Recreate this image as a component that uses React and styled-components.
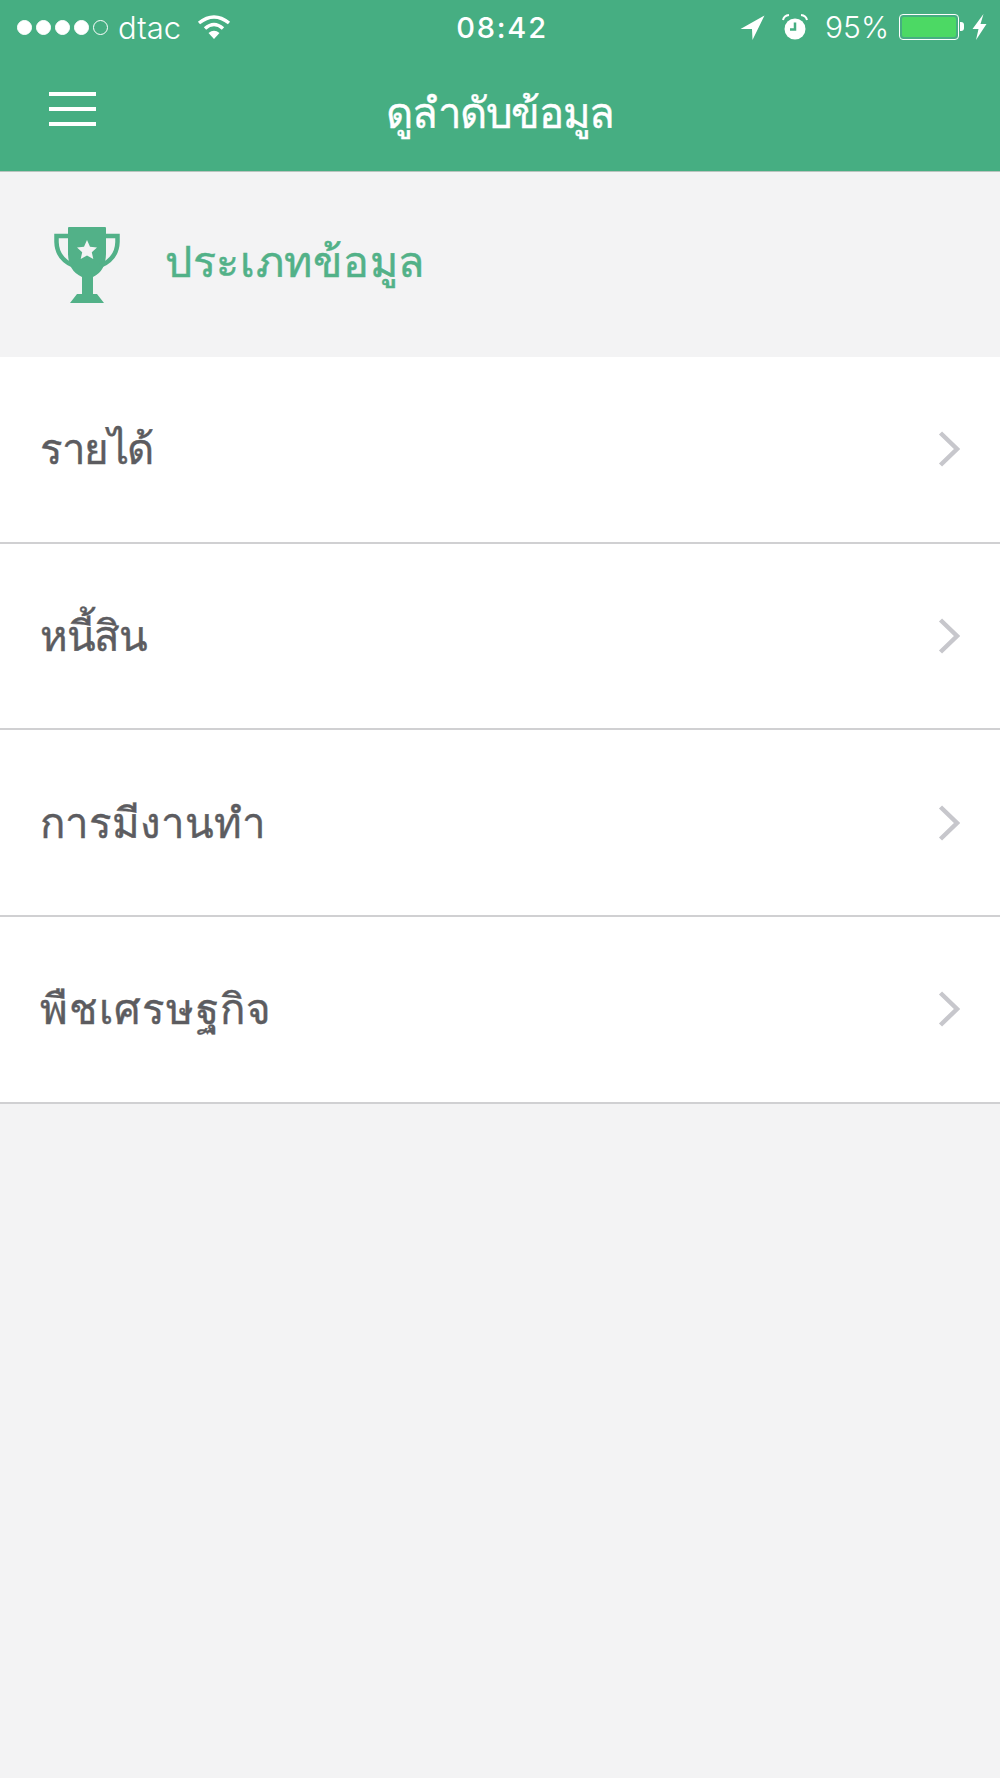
import styled, { createGlobalStyle } from 'styled-components';

const items = [
    { label: 'รายได้', spacing: -1.4 },
    { label: 'หนี้สิน', spacing: -1.5 },
    { label: 'การมีงานทำ', spacing: 0 },
    { label: 'พืชเศรษฐกิจ', spacing: 1.1 },
];

const GlobalStyle = createGlobalStyle`
    html, body {
        margin: 0;
        padding: 0;
        background: #f3f3f4;
    }
`;

const App = () => (
    <Page>
        <GlobalStyle />
        <Header>
            <StatusBar>
                <StatusLeft>
                    <Signal>
                        <Dot /><Dot /><Dot /><Dot /><Dot $empty />
                    </Signal>
                    <Carrier>dtac</Carrier>
                    <svg width="34" height="26" viewBox="0 0 34 26">
                        <path d="M17 25 L11.500 19 Q17 14.500 22.500 19 Z" fill="#fff" />
                        <path d="M8 14.500 Q17 6.500 26 14.500" fill="none" stroke="#fff" strokeWidth="3.500" />
                        <path d="M2 9 Q17 -3 32 9" fill="none" stroke="#fff" strokeWidth="3.500" />
                    </svg>
                </StatusLeft>
                <Clock>08:42</Clock>
                <StatusRight>
                    <svg width="25" height="25" viewBox="0 0 25 25">
                        <path d="M24.500 0.500 L0.500 14 L12 14 L12.500 25 Z" fill="#fff" />
                    </svg>
                    <AlarmIcon width="26" height="26" viewBox="0 0 26 26">
                        <circle cx="13" cy="15" r="10.500" fill="#fff" />
                        <path d="M13 8.500 V15.500 H8" fill="none" stroke="#46ae82" strokeWidth="2.500" />
                        <path d="M1 6 Q2 1.500 7 1 M19 1 Q24 1.500 25 6" fill="none" stroke="#fff" strokeWidth="2" />
                    </AlarmIcon>
                    <Percent>95%</Percent>
                    <Battery>
                        <BatteryFill />
                    </Battery>
                    <svg width="15" height="26" viewBox="0 0 15 26">
                        <path d="M11.500 0 L0.500 15 L6.500 15 L4 26 L14.500 10 L8.500 10 Z" fill="#fff" />
                    </svg>
                </StatusRight>
            </StatusBar>
            <NavBar>
                <MenuIcon>
                    <MenuLine /><MenuLine /><MenuLine />
                </MenuIcon>
                <Title>ดูลำดับข้อมูล</Title>
            </NavBar>
        </Header>
        <SectionHead>
            <svg width="66" height="76" viewBox="0 0 66 76">
                <path d="M14 1 Q14 0 15 0 H51 Q52 0 52 1 V26 Q52 44 39 50 V67 H43 L50 76 H16 L23 67 H28 V50 Q14 44 14 26 Z" fill="#52b188" />
                <path d="M14 9 H2.500 V15 Q3 32 20 39 M52 9 H63.500 V15 Q63 32 46 39" fill="none" stroke="#52b188" strokeWidth="4.500" />
                <path d="M33 13 L36 19.800 L43 20.500 L37.800 25.200 L39.300 32 L33 28.500 L26.700 32 L28.200 25.200 L23 20.500 L30 19.800 Z" fill="#f3f3f4" />
            </svg>
            <SectionTitle>ประเภทข้อมูล</SectionTitle>
        </SectionHead>
        <List>
            {items.map(item => (
                <Row key={item.label}>
                    <RowLabel $spacing={item.spacing}>{item.label}</RowLabel>
                    <svg width="22" height="36" viewBox="0 0 22 36">
                        <path d="M2.500 2 L19 18 L2.500 34" fill="none" stroke="#c7c7cc" strokeWidth="4.500" />
                    </svg>
                </Row>
            ))}
        </List>
    </Page>
);

export default App;

const Page = styled.div`
    width: 1000px;
    height: 1778px;
    background: #f3f3f4;
    font-family: 'Noto Sans', 'Liberation Sans', sans-serif;
    overflow: hidden;
`;

const Header = styled.header`
    height: 172px;
    background: #46ae82;
    color: #fff;
    box-sizing: border-box;
    border-bottom: 1px solid #b8c4be;
`;

const StatusBar = styled.div`
    height: 54px;
    padding: 0 13px 0 17px;
    display: grid;
    grid-template-columns: 1fr auto 1fr;
    align-items: center;
`;

const StatusLeft = styled.div`
    display: flex;
    align-items: center;
`;

const Signal = styled.div`
    display: flex;
    gap: 4px;
    margin-right: 10px;
`;

const Dot = styled.span`
    width: 15px;
    height: 15px;
    box-sizing: border-box;
    border-radius: 50%;
    border: 1px solid #fff;
    background: ${({ $empty }) => ($empty ? 'transparent' : '#fff')};
`;

const Carrier = styled.span`
    font-family: Inter, 'Liberation Sans', sans-serif;
    font-size: 31px;
    font-weight: 300;
    margin-right: 16px;
`;

const Clock = styled.span`
    font-family: Inter, 'Liberation Sans', sans-serif;
    font-size: 29px;
    font-weight: 500;
    letter-spacing: 1.800px;
`;

const StatusRight = styled.div`
    display: flex;
    align-items: center;
    justify-content: flex-end;
`;

const AlarmIcon = styled.svg`
    margin-left: 17px;
`;

const Percent = styled.span`
    font-family: Inter, 'Liberation Sans', sans-serif;
    font-size: 30px;
    font-weight: 300;
    margin: 0 10px 0 17px;
`;

const Battery = styled.div`
    position: relative;
    width: 60px;
    height: 26px;
    box-sizing: border-box;
    border: 1.5px solid #fff;
    border-radius: 4px;
    padding: 2px;
    margin-right: 13px;

    &::after {
        content: '';
        position: absolute;
        right: -6px;
        top: 7px;
        width: 4px;
        height: 9px;
        background: #fff;
        border-radius: 0 3px 3px 0;
    }
`;

const BatteryFill = styled.div`
    height: 100%;
    background: #4cd964;
    border-radius: 2px;
`;

const NavBar = styled.div`
    position: relative;
    height: 116px;
    display: flex;
    align-items: center;
    justify-content: center;
`;

const MenuIcon = styled.div`
    position: absolute;
    left: 49px;
    top: 38px;
    display: flex;
    flex-direction: column;
    gap: 11px;
`;

const MenuLine = styled.span`
    width: 47px;
    height: 4px;
    background: #fff;
`;

const Title = styled.h1`
    margin: 0;
    font-size: 42px;
    font-weight: 400;
    line-height: 1;
    letter-spacing: -1.400px;
    -webkit-text-stroke: 0.35px #fff;
`;

const SectionHead = styled.div`
    height: 185px;
    padding-left: 54px;
    display: flex;
    align-items: center;
    gap: 45px;
`;

const SectionTitle = styled.div`
    font-size: 43px;
    color: #52b188;
    letter-spacing: 0.700px;
    margin-bottom: 6px;
    -webkit-text-stroke: 0.5px #52b188;
`;

const List = styled.div`
    background: #fff;
`;

const Row = styled.div`
    height: 186.670px;
    box-sizing: border-box;
    padding: 0 40px 0 40px;
    border-bottom: 2px solid #d0d0d2;
    display: flex;
    align-items: center;
    justify-content: space-between;
`;

const RowLabel = styled.span`
    font-size: 42px;
    color: #5c5c60;
    letter-spacing: ${({ $spacing }) => $spacing}px;
    -webkit-text-stroke: 0.4px #5c5c60;
`;
